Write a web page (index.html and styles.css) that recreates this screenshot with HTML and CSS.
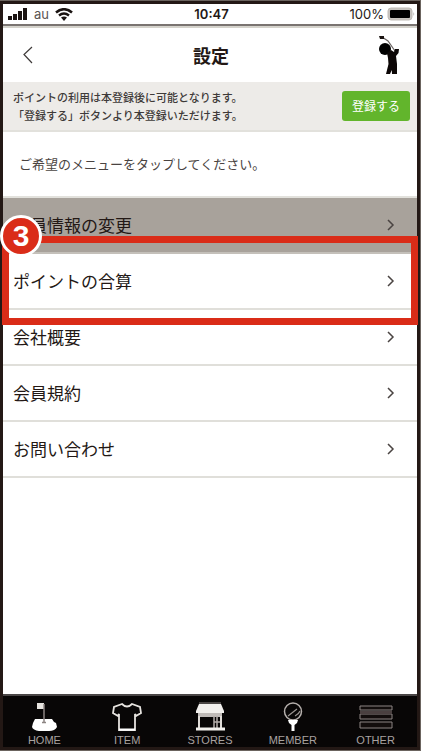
FILE: index.html
```html
<!DOCTYPE html>
<html lang="ja">

<head>
    <meta charset="UTF-8">
    <meta name="viewport" content="width=device-width, initial-scale=1.0">
    <title>設定</title>
    <link rel="stylesheet" href="styles.css">
</head>

<body>
    <div class="phone">
        <div class="status-bar">
            <div class="status-left">
                <svg class="signal" viewBox="0 0 20 12" width="20" height="12">
                    <path d="M0 8h4v4H0zM5 6h4v6H5zM10 3h4v9h-4zM15 0h4v12h-4z" fill="#1a1311" />
                </svg>
                <span class="carrier">au</span>
                <svg class="wifi" viewBox="0 0 18 13" width="18" height="13">
                    <path d="M1 4.500Q9 -2 17 4.500" fill="none" stroke="#1a1311" stroke-width="2.600" />
                    <path d="M4 7.500Q9 3.500 14 7.500" fill="none" stroke="#1a1311" stroke-width="2.400" />
                    <path d="M6 9.500Q9 7.500 12 9.500L9 13z" fill="#1a1311" />
                </svg>
            </div>
            <span class="clock">10:47</span>
            <div class="status-right">
                <span>100%</span>
                <svg viewBox="0 0 28 14" width="28" height="14">
                    <rect x="1" y="1" width="24" height="12" rx="3" fill="#c8c4c0" stroke="#c0bbb6" />
                    <rect x="3" y="3" width="20" height="8" rx="1" fill="#000" />
                    <path d="M26.500 5q1.500 2 0 4z" fill="#a09a96" />
                </svg>
            </div>
        </div>

        <header class="header">
            <button class="back" type="button" aria-label="戻る">
                <svg viewBox="0 0 10 18" width="10" height="18">
                    <path d="M9 1L1 8.500L9 17" fill="none" stroke="#3e3a39" stroke-width="1.200" />
                </svg>
            </button>
            <h1 class="title">設定</h1>
            <svg class="golfer" viewBox="0 0 20 40" width="20" height="40">
                <path d="M3 2L9 6L16 16" fill="none" stroke="#6a6462" stroke-width="1.200" />
                <path d="M0 1h5v3H1z" fill="#1a1311" />
                <circle cx="6" cy="14" r="6" fill="#000" />
                <path d="M8 18L12 15L15 17L16 14L20 14L19.500 18L17 21L18 29V39H13L12.800 35L11 39H7L9.500 29L9 23z" fill="#0c0706" />
            </svg>
        </header>

        <section class="notice">
            <p>ポイントの利用は本登録後に可能となります。<br>「登録する」ボタンより本登録いただけます。</p>
            <button class="register" type="button">登録する</button>
        </section>

        <p class="prompt">ご希望のメニューをタップしてください。</p>

        <nav>
            <ul class="menu">
                <li class="menu-item selected">
                    <a href="#">会員情報の変更
                        <svg viewBox="0 0 8 12" width="8" height="12"><path d="M1 1L6 6L1 11" /></svg>
                    </a>
                </li>
                <li class="menu-item step">
                    <a href="#">ポイントの合算
                        <svg viewBox="0 0 8 12" width="8" height="12"><path d="M1 1L6 6L1 11" /></svg>
                    </a>
                    <div class="highlight"></div>
                    <span class="badge">3</span>
                </li>
                <li class="menu-item">
                    <a href="#">会社概要
                        <svg viewBox="0 0 8 12" width="8" height="12"><path d="M1 1L6 6L1 11" /></svg>
                    </a>
                </li>
                <li class="menu-item">
                    <a href="#">会員規約
                        <svg viewBox="0 0 8 12" width="8" height="12"><path d="M1 1L6 6L1 11" /></svg>
                    </a>
                </li>
                <li class="menu-item">
                    <a href="#">お問い合わせ
                        <svg viewBox="0 0 8 12" width="8" height="12"><path d="M1 1L6 6L1 11" /></svg>
                    </a>
                </li>
            </ul>
        </nav>

        <nav class="tab-bar">
            <a href="#">
                <svg viewBox="0 0 34 30" width="34" height="30">
                    <path d="M10 1h7v6h-7z" fill="#e6e3df" />
                    <path d="M8 17H25L27 20L29 21L30 25Q28 29 22 29H12Q6 28 5 25L6 21z" fill="#fff" />
                    <path d="M17 2V20" stroke="#8c8583" stroke-width="1.500" />
                    <path d="M15 20.500h4" stroke="#8c8583" stroke-width="1.500" />
                </svg>
                <span>HOME</span>
            </a>
            <a href="#">
                <svg viewBox="0 0 34 30" width="34" height="30">
                    <path d="M12 2L4 5L3 11L8 14L9 12V28H25V12L26 14L31 11L30 5L22 2Q17 7 12 2z" fill="none" stroke="#e6e3df" stroke-width="1.800" />
                    <path d="M9 27.500h16" stroke="#fff" stroke-width="2" />
                </svg>
                <span>ITEM</span>
            </a>
            <a href="#">
                <svg viewBox="0 0 34 30" width="34" height="30">
                    <path d="M6 1h22" stroke="#8c8583" />
                    <path d="M6 2H28L31 9V11H3V9z" fill="#f2f0ed" />
                    <path d="M5 11H29V15H5z" fill="#c0bbb8" />
                    <path d="M6 14V26M28 14V26" stroke="#e0dcd8" stroke-width="2" />
                    <path d="M21 14V26M24 14V26M21 20h6" stroke="#b5afac" stroke-width="1.500" />
                    <path d="M3 27h29" stroke="#f2f0ed" stroke-width="3" />
                </svg>
                <span>STORES</span>
            </a>
            <a href="#">
                <svg viewBox="0 0 34 30" width="34" height="30">
                    <circle cx="17" cy="9.500" r="8.500" fill="none" stroke="#b5afac" stroke-width="1.500" />
                    <path d="M12 14L21 7M19 14Q23 12 24 9" fill="none" stroke="#9b9592" stroke-width="1.200" />
                    <path d="M12 18H22L21 21L18.500 23V29H15.500V23L13 21z" fill="#fff" />
                </svg>
                <span>MEMBER</span>
            </a>
            <a href="#">
                <svg viewBox="0 0 34 30" width="34" height="30">
                    <path d="M1 4h32v4H1zM1 12h32v5H1zM1 20h32v6H1z" fill="#120d0c" stroke="#8c8583" />
                    <path d="M1 10.500h32" stroke="#4a4040" stroke-width="3" />
                </svg>
                <span>OTHER</span>
            </a>
        </nav>
    </div>
</body>

</html>
```

FILE: styles.css
```css
* {
    margin: 0;
    padding: 0;
    box-sizing: border-box;
}

body {
    padding: 1px 1px 1px 0;
    background-color: #6b645f;
    color: #231815;
    font-family: "Noto Sans CJK JP", sans-serif;
}

svg {
    display: block;
    flex: none;
}

a {
    color: inherit;
    text-decoration: none;
}

button {
    border: none;
    background: none;
    font-family: inherit;
}

.phone {
    display: flex;
    flex-direction: column;
    min-height: calc(100vh - 2px);
    border: 3px solid #231815;
    background-color: #fff;
}

.status-bar {
    display: grid;
    grid-template-columns: 1fr auto 1fr;
    align-items: center;
    height: 22px;
    padding: 0 2px 0 5px;
    border-bottom: 2px solid #7a7471;
    font-family: Inter, sans-serif;
    font-size: 13px;
    line-height: 20px;
}

.status-left,
.status-right {
    display: flex;
    align-items: center;
}

.status-left {
    gap: 6px;
}

.status-right {
    justify-content: flex-end;
    gap: 3px;
}

.carrier {
    color: #5a5452;
}

.clock {
    font-weight: 600;
}

.header {
    display: flex;
    align-items: center;
    justify-content: space-between;
    height: 56px;
    padding: 0 18px 0 20px;
    border-top: 2px solid #d5d3cc;
}

.back {
    width: 20px;
}

.title {
    font-size: 18px;
    font-weight: 700;
    line-height: 24px;
}

.notice {
    display: flex;
    align-items: center;
    justify-content: space-between;
    padding: 6px 7px 6px 10px;
    border-bottom: 2px solid #e2e1dc;
    background-color: #edebe8;
    color: #3e3a39;
    font-size: 11px;
    font-weight: 500;
    line-height: 18px;
}

.register {
    padding: 5px 10px;
    border-radius: 3px;
    background-color: #62b52c;
    color: #fff;
    font-size: 12px;
    line-height: 20px;
}

.prompt {
    padding: 22px 16px;
    border-bottom: 2px solid #e2e1dc;
    color: #4a4442;
    font-size: 13px;
    line-height: 20px;
}

.menu {
    list-style: none;
}

.menu-item {
    border-bottom: 2px solid #e0dfda;
}

.menu-item a {
    display: flex;
    align-items: center;
    justify-content: space-between;
    padding: 15px 22px 15px 10px;
    font-size: 17px;
    line-height: 24px;
}

.menu-item path {
    fill: none;
    stroke: #4a4442;
    stroke-width: 1.5;
}

.menu-item.selected {
    border-bottom-color: #c4c0ba;
    background-color: #a8a29b;
}

.step {
    position: relative;
}

/* red frame and step number */
.highlight {
    position: absolute;
    top: -18px;
    right: -1px;
    bottom: -17px;
    left: -1px;
    border: 7px solid #da2c18;
    pointer-events: none;
}

.badge {
    position: absolute;
    top: -39px;
    left: -3px;
    width: 42px;
    height: 42px;
    border: 3px solid #fff;
    border-radius: 50%;
    background-color: #da2c18;
    color: #fff;
    font-family: "Liberation Sans", sans-serif;
    font-size: 30px;
    font-weight: 700;
    line-height: 36px;
    text-align: center;
}

.tab-bar {
    display: grid;
    grid-template-columns: repeat(5, 1fr);
    margin-top: auto;
    padding: 6px 0 1px;
    border-top: 2px solid #4a4646;
    background-color: #080606;
}

.tab-bar a {
    display: flex;
    flex-direction: column;
    align-items: center;
    gap: 2px;
    color: #a8a2a0;
    font-family: "Liberation Sans", sans-serif;
    font-size: 11px;
    line-height: 12px;
}
```
